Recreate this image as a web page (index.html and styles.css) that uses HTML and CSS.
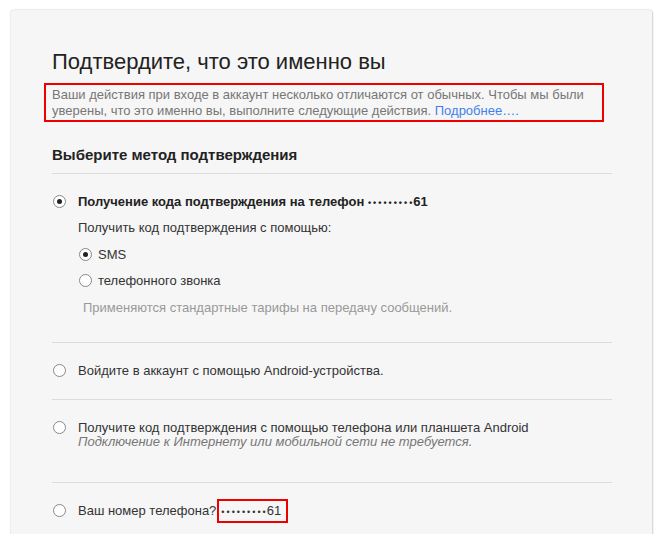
FILE: index.html
```html
<!DOCTYPE html>
<html lang="ru">
<head>
  <meta charset="UTF-8" />
  <meta name="viewport" content="width=device-width, initial-scale=1" />
  <title>Подтвердите, что это именно вы</title>
  <link rel="stylesheet" href="styles.css">
</head>
<body>
  <div class="card">
    <h1>Подтвердите, что это именно вы</h1>
    <p class="intro">Ваши действия при входе в аккаунт несколько отличаются от обычных. Чтобы мы были уверены, что это именно вы, выполните следующие действия. <a href="#">Подробнее….</a></p>

    <h2>Выберите метод подтверждения</h2>

    <div class="option first">
      <label class="choice">
        <input type="radio" name="method" checked />
        <span class="strong">Получение кода подтверждения на телефон <span class="dots">•••••••••</span>61</span>
      </label>
      <div class="sub">
        <p class="sub-title">Получить код подтверждения с помощью:</p>
        <label class="choice small sms">
          <input type="radio" name="via" checked />
          <span>SMS</span>
        </label>
        <label class="choice small call">
          <input type="radio" name="via" />
          <span>телефонного звонка</span>
        </label>
        <p class="note">Применяются стандартные тарифы на передачу сообщений.</p>
      </div>
    </div>

    <div class="option">
      <label class="choice">
        <input type="radio" name="method" />
        <span>Войдите в аккаунт с помощью Android-устройства.</span>
      </label>
    </div>

    <div class="option tall">
      <label class="choice">
        <input type="radio" name="method" />
        <span>Получите код подтверждения с помощью телефона или планшета Android<br><em>Подключение к Интернету или мобильной сети не требуется.</em></span>
      </label>
    </div>

    <div class="option last">
      <label class="choice">
        <input type="radio" name="method" />
        <span>Ваш номер телефона?<span class="mark"><span class="dots">•••••••••</span>61</span></span>
      </label>
    </div>
  </div>
</body>
</html>
```

FILE: styles.css
```css
* { box-sizing: border-box; }
body {
  margin: 0;
  padding: 10px 0 0 11px;
  background-color: #fff;
  font-family: "Liberation Sans", Arial, sans-serif;
  color: #333;
  font-size: 13px;
  line-height: 16px;
}
.card {
  width: 641px;
  min-height: 600px;
  background-color: #f6f6f6;
  border-radius: 3px;
  box-shadow: 0 0 2px rgba(0,0,0,0.25), 1px 1px 2px rgba(0,0,0,0.12);
  padding: 39px 40px 0 41px;
}
h1 {
  margin: 0;
  font-size: 22px;
  line-height: 26px;
  font-weight: normal;
  color: #222;
}
.intro {
  margin: 8px 0 0 -8px;
  width: 560px;
  border: 2px solid #e00;
  padding: 2px 6px 1px;
  line-height: 16px;
  color: #777;
}
.intro a {
  color: #427fed;
  text-decoration: none;
}
h2 {
  margin: 24px 0 0;
  font-size: 15px;
  line-height: 18px;
  font-weight: bold;
  color: #222;
  padding-bottom: 9px;
  border-bottom: 1px solid #dcdcdc;
}
.option {
  padding: 20px 0 20px;
  border-bottom: 1px solid #dcdcdc;
}
.option.first { padding-bottom: 26px; }
.option.tall {
  padding: 21px 0 33px;
  line-height: 14px;
}
.option.tall input[type=radio] { margin-top: 0; }
.option.last { border-bottom: none; }
.choice {
  display: flex;
  align-items: flex-start;
  gap: 12px;
  padding-left: 1px;
}
.choice em {
  color: #777;
}
.strong {
  font-weight: bold;
  color: #222;
}
.dots {
  font-size: 9px;
  line-height: 0;
  letter-spacing: 2px;
  margin-right: -1px;
}
input[type=radio] {
  appearance: none;
  -webkit-appearance: none;
  margin: 1px 0 0;
  width: 13px;
  height: 13px;
  flex: none;
  border: 1px solid #888;
  border-radius: 50%;
  background-color: #fff;
  position: relative;
}
input[type=radio]:checked::after {
  content: "";
  position: absolute;
  left: 3px;
  top: 3px;
  width: 5px;
  height: 5px;
  border-radius: 50%;
  background-color: #222;
}
.sub {
  padding-left: 26px;
}
.sub-title { margin: 10px 0 0; }
.choice.small {
  gap: 6px;
  padding-left: 1px;
}
.sms { margin-top: 11px; }
.call { margin-top: 10px; }
.note {
  margin: 11px 0 0 5px;
  color: #999;
}
.mark {
  display: inline-block;
  border: 2px solid #e00;
  padding: 2px 5px 2px 2px;
  margin: -4px 0 -4px 1px;
  line-height: 16px;
}
```
